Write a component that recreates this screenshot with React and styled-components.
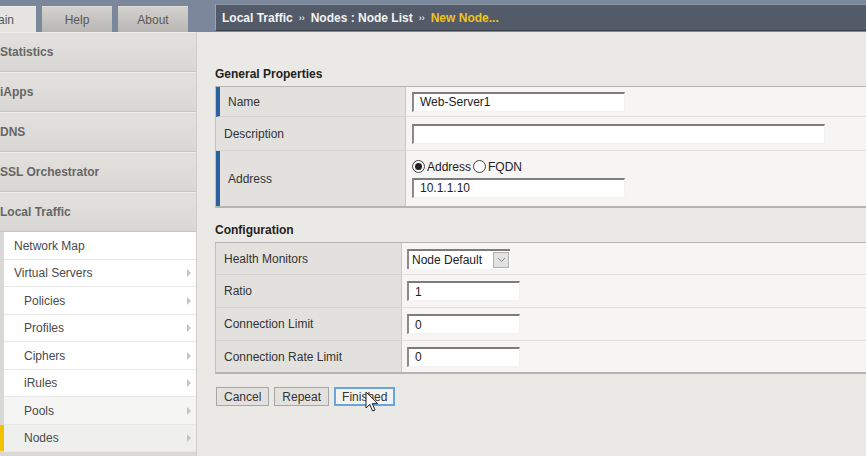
import React from 'react';
import styled, { createGlobalStyle } from 'styled-components';

const GlobalStyle = createGlobalStyle`
  html, body {
    margin: 0;
    padding: 0;
    background: #ebe9e6;
    font-family: "Liberation Sans", Arial, sans-serif;
    font-size: 12px;
    color: #333;
  }
`;

const Page = styled.div`
  position: relative;
  width: 866px;
  height: 456px;
  overflow: hidden;
  display: grid;
  grid-template-columns: 197px 1fr;
  grid-template-rows: 32px 1fr;
`;

const Header = styled.div`
  grid-column: 1 / 3;
  display: flex;
  align-items: flex-end;
  background: #7b889b;
`;

const Tabs = styled.div`
  display: flex;
  gap: 6px;
  width: 215px;
  flex-shrink: 0;
  height: 26px;
`;

const Tab = styled.div`
  width: 70px;
  flex-shrink: 0;
  display: flex;
  align-items: center;
  justify-content: center;
  font-size: 12px;
  color: #585858;
  margin-left: ${(p) => (p.$offset ? `${p.$offset}px` : '0')};
  background: ${(p) =>
    p.$active
      ? '#e6e4e0'
      : 'linear-gradient(#d3d1ce, #b9b7b4)'};
  border-top: 1px solid ${(p) => (p.$active ? '#f2f0ec' : '#dedcd8')};
  box-sizing: border-box;
`;

const Breadcrumb = styled.div`
  flex: 1;
  height: 25px;
  margin-bottom: 1px;
  display: flex;
  align-items: center;
  padding-left: 6px;
  background: #535b69;
  border-top: 1px solid #8a94a5;
  border-left: 1px solid #9aa3b2;
  border-bottom: 1px solid #3b414c;
  color: #f2f2f2;
  font-weight: bold;
  font-size: 12px;
  white-space: nowrap;
`;

const Sep = styled.span`
  font-size: 9px;
  margin: 0 6px;
  color: #e0e0e0;
`;

const Current = styled.span`
  color: #f0c419;
`;

const Sidebar = styled.div`
  background: #dad8d4;
  display: flex;
  flex-direction: column;
  border-right: 1px solid #d0cec9;
  box-sizing: border-box;
`;

const MainItem = styled.div`
  height: 40px;
  box-sizing: border-box;
  display: flex;
  align-items: center;
  padding-left: 0;
  font-weight: bold;
  font-size: 12px;
  color: #666;
  background: linear-gradient(#e3e1dd, #d9d7d3);
  border-top: 1px solid #efede9;
  border-bottom: 1px solid #c6c4c0;
  white-space: nowrap;
`;

const SubList = styled.div`
  margin-left: 4px;
  display: flex;
  flex-direction: column;
`;

const SubItem = styled.div`
  position: relative;
  height: 27.5px;
  box-sizing: border-box;
  display: flex;
  align-items: center;
  justify-content: space-between;
  padding-top: 1px;
  padding-left: ${(p) => (p.$level === 2 ? '20px' : '10px')};
  padding-right: 5px;
  font-size: 12px;
  color: #4a4a4a;
  background: ${(p) => p.$bg || '#ffffff'};
  border-bottom: 1px solid #e8e8e6;

  ${(p) =>
    p.$selected &&
    `
    &::before {
      content: '';
      position: absolute;
      left: -4px;
      top: 0;
      bottom: 0;
      width: 4px;
      background: #f2c200;
    }
  `}
`;

const Arrow = styled.span`
  width: 0;
  height: 0;
  border-top: 4px solid transparent;
  border-bottom: 4px solid transparent;
  border-left: 4px solid #c4c4c4;
`;

const Main = styled.div`
  padding: 35px 0 0 18px;
  overflow: hidden;
`;

const SectionTitle = styled.div`
  font-weight: bold;
  font-size: 12px;
  color: #222;
  height: 19px;
  line-height: 14px;
  margin-top: ${(p) => (p.$gap ? `${p.$gap}px` : '0')};
`;

const Table = styled.div`
  display: grid;
  grid-template-columns: ${(p) => p.$labelWidth}px 1fr;
  margin-right: -10px;
  border-top: 1px solid #b4b4b4;
  border-bottom: 2px solid #b4b4b4;
  border-left: 1px solid #c0c0c0;
`;

const Label = styled.div`
  height: ${(p) => p.$h}px;
  box-sizing: border-box;
  display: flex;
  align-items: center;
  padding-left: 8px;
  background: #e3e1de;
  border-left: ${(p) => (p.$required ? '4px solid #2d62a0' : 'none')};
  border-right: 1px solid #c9c7c4;
  border-bottom: ${(p) => (p.$last ? 'none' : '1px solid #d4d2cf')};
  color: #333;
  font-size: 12px;
`;

const Value = styled.div`
  height: ${(p) => p.$h}px;
  box-sizing: border-box;
  display: flex;
  flex-direction: column;
  justify-content: center;
  gap: 4px;
  padding-left: ${(p) => p.$pad || 5}px;
  background: #f6f5f3;
  border-bottom: ${(p) => (p.$last ? 'none' : '1px solid #e2e0dd')};
`;

const TextInput = styled.div`
  width: ${(p) => p.$w}px;
  height: 20px;
  box-sizing: border-box;
  background: #fff;
  border-top: 2px solid #7c7c7c;
  border-left: 2px solid #8a8a8a;
  border-right: 1px solid #f2f2f2;
  border-bottom: 1px solid #f2f2f2;
  padding-left: 6px;
  display: flex;
  align-items: center;
  font-size: 12px;
  color: #222;
`;

const RadioRow = styled.div`
  display: flex;
  align-items: center;
  font-size: 12px;
  color: #222;
  height: 14px;
`;

const Radio = styled.span`
  width: 11px;
  height: 11px;
  border-radius: 50%;
  border: 1px solid #444;
  background: #fff;
  margin-right: 2px;
  margin-left: ${(p) => (p.$spaced ? '2px' : '0')};
  display: inline-flex;
  align-items: center;
  justify-content: center;

  &::after {
    content: '';
    width: 7px;
    height: 7px;
    border-radius: 50%;
    background: ${(p) => (p.$checked ? '#222' : 'transparent')};
  }
`;

const Select = styled.div`
  width: 103px;
  height: 20px;
  box-sizing: border-box;
  background: #fff;
  border-top: 2px solid #7c7c7c;
  border-left: 2px solid #8a8a8a;
  display: flex;
  align-items: center;
  justify-content: space-between;
  padding-left: 3px;
  font-size: 12px;
  color: #222;
`;

const SelectArrow = styled.span`
  width: 16px;
  height: 16px;
  box-sizing: border-box;
  border: 1px solid #b0b0b0;
  background: #e2e2e2;
  display: flex;
  align-items: center;
  justify-content: center;
  margin-right: 1px;
`;

const Buttons = styled.div`
  display: flex;
  gap: 5px;
  margin-top: 13px;
  margin-left: 1px;
`;

const Button = styled.div`
  height: 19px;
  box-sizing: border-box;
  padding: 0 ${(p) => (p.$focus ? '6px' : '7px')};
  display: flex;
  align-items: center;
  font-size: 12px;
  color: #333;
  background: ${(p) => (p.$focus ? '#f2f2f0' : '#e2e1de')};
  border: ${(p) => (p.$focus ? '2px solid #6aa4dc' : '1px solid #a6a6a6')};
`;

const Cursor = styled.svg`
  position: absolute;
  left: 365px;
  top: 391px;
`;

const subItems = [
  { name: 'Network Map', level: 1 },
  { name: 'Virtual Servers', level: 1, arrow: true },
  { name: 'Policies', level: 2, arrow: true },
  { name: 'Profiles', level: 2, arrow: true },
  { name: 'Ciphers', level: 2, arrow: true },
  { name: 'iRules', level: 2, arrow: true },
  { name: 'Pools', level: 2, arrow: true, bg: '#f5f5f4' },
  { name: 'Nodes', level: 2, arrow: true, bg: '#efefed', selected: true },
];

const App = () => {
  return (
    <>
      <GlobalStyle />
      <Page>
        <Header>
          <Tabs>
            <Tab $active $offset={-34}>Main</Tab>
            <Tab>Help</Tab>
            <Tab>About</Tab>
          </Tabs>
          <Breadcrumb>
            Local Traffic<Sep>››</Sep>Nodes : Node List<Sep>››</Sep>
            <Current>New Node...</Current>
          </Breadcrumb>
        </Header>

        <Sidebar>
          {['Statistics', 'iApps', 'DNS', 'SSL Orchestrator', 'Local Traffic'].map((item) => (
            <MainItem key={item}>{item}</MainItem>
          ))}
          <SubList>
            {subItems.map((item) => (
              <SubItem
                key={item.name}
                $level={item.level}
                $bg={item.bg}
                $selected={item.selected}
              >
                {item.name}
                {item.arrow && <Arrow />}
              </SubItem>
            ))}
          </SubList>
        </Sidebar>

        <Main>
          <SectionTitle>General Properties</SectionTitle>
          <Table $labelWidth={190}>
            <Label $h={30} $required>Name</Label>
            <Value $h={30} $pad={6}>
              <TextInput $w={213}>Web-Server1</TextInput>
            </Value>
            <Label $h={34}>Description</Label>
            <Value $h={34} $pad={6}>
              <TextInput $w={413} />
            </Value>
            <Label $h={55} $required $last>Address</Label>
            <Value $h={55} $pad={6} $last>
              <RadioRow>
                <Radio $checked />
                Address
                <Radio $spaced />
                FQDN
              </RadioRow>
              <TextInput $w={213}>10.1.1.10</TextInput>
            </Value>
          </Table>

          <SectionTitle $gap={15}>Configuration</SectionTitle>
          <Table $labelWidth={186}>
            <Label $h={32}>Health Monitors</Label>
            <Value $h={32}>
              <Select>
                Node Default
                <SelectArrow>
                  <svg width="9" height="6" viewBox="0 0 9 6">
                    <path d="M1 1 L4.5 4.5 L8 1" fill="none" stroke="#888" strokeWidth="1" />
                  </svg>
                </SelectArrow>
              </Select>
            </Value>
            <Label $h={33}>Ratio</Label>
            <Value $h={33}>
              <TextInput $w={113}>1</TextInput>
            </Value>
            <Label $h={33}>Connection Limit</Label>
            <Value $h={33}>
              <TextInput $w={113}>0</TextInput>
            </Value>
            <Label $h={31} $last>Connection Rate Limit</Label>
            <Value $h={31} $last>
              <TextInput $w={113}>0</TextInput>
            </Value>
          </Table>

          <Buttons>
            <Button>Cancel</Button>
            <Button>Repeat</Button>
            <Button $focus>Finished</Button>
          </Buttons>
        </Main>

        <Cursor width="14" height="22" viewBox="0 0 14 22">
          <path
            d="M1 1 L1 17 L4.8 13.4 L7.6 20 L10 19 L7.3 12.6 L12.5 12.6 Z"
            fill="#fff"
            stroke="#222"
            strokeWidth="1"
            strokeLinejoin="round"
          />
        </Cursor>
      </Page>
    </>
  );
};

export default App;
